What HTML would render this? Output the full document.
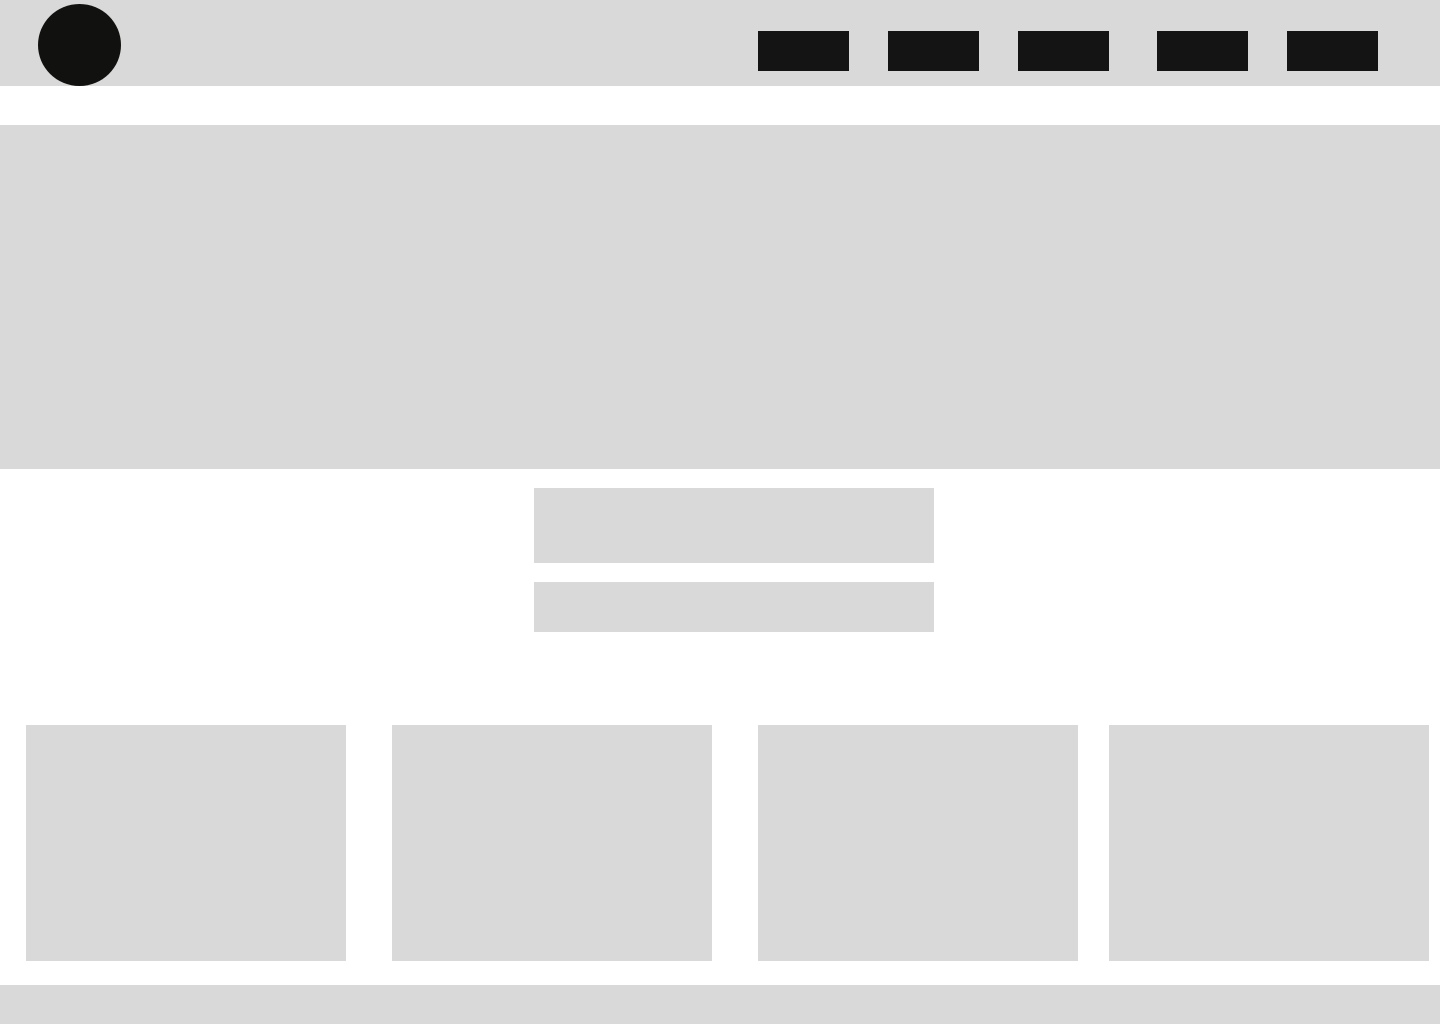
<!DOCTYPE html>
<html><head><style>
html,body{margin:0;padding:0;width:1440px;height:1024px;background:#fff;position:relative;overflow:hidden}
div{position:absolute;background:#d9d9d9}
.k{background:#141414}
</style></head><body>
<div style="left:0;top:0;width:1440px;height:86px"></div>
<div style="left:38px;top:4px;width:83px;height:82px;border-radius:50%;background:#11110f"></div>
<div class="k" style="left:758px;top:31px;width:91px;height:40px"></div>
<div class="k" style="left:888px;top:31px;width:91px;height:40px"></div>
<div class="k" style="left:1018px;top:31px;width:91px;height:40px"></div>
<div class="k" style="left:1157px;top:31px;width:91px;height:40px"></div>
<div class="k" style="left:1287px;top:31px;width:91px;height:40px"></div>
<div style="left:0;top:125px;width:1440px;height:344px"></div>
<div style="left:534px;top:488px;width:400px;height:75px"></div>
<div style="left:534px;top:582px;width:400px;height:50px"></div>
<div style="left:26px;top:725px;width:320px;height:236px"></div>
<div style="left:392px;top:725px;width:320px;height:236px"></div>
<div style="left:758px;top:725px;width:320px;height:236px"></div>
<div style="left:1109px;top:725px;width:320px;height:236px"></div>
<div style="left:0;top:985px;width:1440px;height:39px"></div>
</body></html>
